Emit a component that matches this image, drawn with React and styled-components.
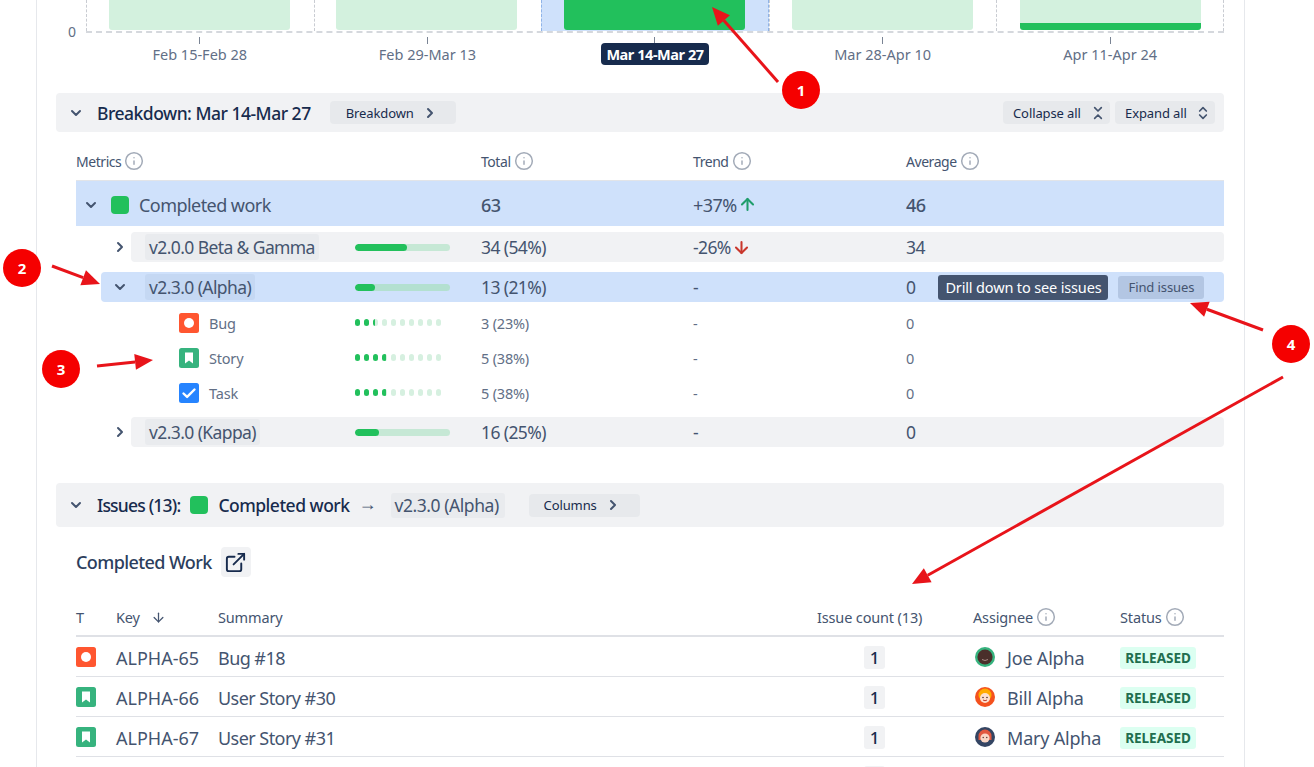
import React from "react";
import styled, { createGlobalStyle } from "styled-components";
import {
  ChevronDown,
  ChevronRight,
  ChevronsDownUp,
  ChevronsUpDown,
  ArrowUp,
  ArrowDown,
  ExternalLink,
  Info,
} from "lucide-react";

const Global = createGlobalStyle`
  html, body { margin: 0; padding: 0; background: #fff; height: 767px; overflow: hidden; }
  body { font-family: "Noto Sans", "Open Sans", "Liberation Sans", sans-serif; color: #44546f; }
  * { box-sizing: border-box; }
`;

const Page = styled.div`
  position: relative;
  width: 1314px;
  height: 767px;
  overflow: hidden;
`;

const Card = styled.main`
  margin-left: 36px;
  width: 1209px;
  height: 900px;
  padding: 0 20px 0 19px;
  background: #fff;
  border-left: 1px solid #e6e8ec;
  border-right: 1px solid #e6e8ec;
`;

/* chart */
const Chart = styled.section`
  display: grid;
  grid-template-columns: 30px 1fr;
  grid-template-rows: 33px auto;
`;
const YLabel = styled.span`
  align-self: end;
  justify-self: end;
  margin-right: 10px;
  font-size: 14px;
  line-height: 20px;
  margin-bottom: -9px;
  color: #626f86;
`;
const Plot = styled.div`
  display: grid;
  grid-template-columns: repeat(5, 1fr);
  border-bottom: 2px dashed #d5d8dd;
`;
const Slot = styled.div`
  display: flex;
  justify-content: center;
  height: 31px;
  padding-right: ${(p) => (p.$last || p.$active ? 0 : 2)}px;
  border-left: 1px dashed ${(p) => (p.$active ? "#8fb3e8" : "#c9ccd2")};
  border-right: ${(p) => (p.$last || p.$active ? "1px dashed" : "0 none")} ${(p) => (p.$active ? "#8fb3e8" : "#c9ccd2")};
  background: ${(p) => (p.$active ? "#cfe1fb" : "transparent")};
`;
const Bar = styled.div`
  width: 181px;
  height: 30px;
  border-radius: 0 0 3px 3px;
  background: ${(p) => (p.$active ? "#22c05c" : "#d3f1de")};
  border-bottom: ${(p) => (p.$stripe ? "7px solid #22c05c" : "0 none")};
`;
const XAxis = styled.div`
  grid-column: 2;
  display: grid;
  grid-template-columns: repeat(5, 1fr);
`;
const XCell = styled.div`
  display: flex;
  flex-direction: column;
  align-items: center;
  padding-top: 4px;
`;
const Tick = styled.i`
  display: block;
  width: 1px;
  height: 7px;
  background: #7a8494;
`;
const XLabel = styled.span`
  margin-top: -1px;
  height: 22px;
  line-height: 22px;
  padding: 0 5px;
  border-radius: 4px;
  font-size: 14.5px;
  white-space: nowrap;
  letter-spacing: ${(p) => (p.$active ? "-0.45px" : "0")};
  position: relative;
  color: ${(p) => (p.$active ? "#fff" : "#626f86")};
  background: ${(p) => (p.$active ? "#172b4d" : "transparent")};
  font-weight: ${(p) => (p.$active ? 700 : 400)};
`;

/* section bars */
const SectionBar = styled.header`
  display: flex;
  align-items: center;
  height: ${(p) => p.$h}px;
  margin-top: ${(p) => p.$mt}px;
  padding-left: 12px;
  background: #f1f2f4;
  border-radius: 4px;
  color: #172b4d;
`;
const BarTitle = styled.h2`
  margin: 0 0 0 13px;
  font-size: 17.5px;
  font-weight: 500;
  letter-spacing: -0.5px;
  white-space: nowrap;
`;
const Chip = styled.button`
  display: flex;
  align-items: center;
  height: 23px;
  width: ${(p) => p.$w}px;
  margin-left: ${(p) => p.$ml || 0}px;
  padding: 0 0 0 ${(p) => p.$pad || 10}px;
  gap: ${(p) => p.$gap || 8}px;
  border: 0;
  border-radius: 4px;
  background: #e7e9ec;
  color: #172b4d;
  font: inherit;
  font-size: 13px;
  letter-spacing: -0.1px;
  white-space: nowrap;
`;
const BarActions = styled.div`
  display: flex;
  gap: 5px;
  margin-left: auto;
  padding-right: 9px;
`;

/* metric table */
const MetricHead = styled.div`
  display: grid;
  grid-template-columns: 405px 212px 213px 1fr;
  height: 49px;
  margin-left: 20px;
  padding-top: 10px;
  align-items: center;
  border-bottom: 1px solid #e2e4e8;
`;
const HeadLabel = styled.span`
  display: flex;
  align-items: center;
  gap: 3px;
  font-size: 14px;
  letter-spacing: -0.45px;
  color: #44546f;
  white-space: nowrap;
`;
const InfoIcon = styled(Info)`
  width: 20px;
  height: 20px;
  color: #a3abb8;
  stroke-width: 1.8;
`;
const TotalRow = styled.div`
  display: grid;
  grid-template-columns: 405px 212px 213px 1fr;
  height: 45px;
  padding-top: 2px;
  margin-left: 20px;
  margin-bottom: 6px;
  align-items: center;
  background: #cfe1fb;
  font-size: 18px;
  letter-spacing: -0.55px;
`;
const TotalName = styled.div`
  display: flex;
  align-items: center;
  padding-left: 7px;
  white-space: nowrap;
`;
const Square = styled.span`
  width: 18px;
  height: 18px;
  border-radius: 4px;
  background: #22c05c;
  margin: ${(p) => p.$m};
  flex: none;
`;
const Strong = styled.span`
  font-weight: 500;
`;
const Trend = styled.span`
  display: flex;
  align-items: center;
  gap: 1px;
`;
const GroupRow = styled.div`
  display: flex;
  height: 30px;
  margin-left: 45px;
  margin-bottom: ${(p) => p.$mb || 0}px;
  border-radius: 4px;
  background: ${(p) => (p.$active ? "#cfe1fb" : "transparent")};
`;
const Gutter = styled.div`
  display: flex;
  align-items: center;
  justify-content: flex-end;
  width: 30px;
  padding-right: 3px;
  color: #44546f;
  flex: none;
`;
const GroupBody = styled.div`
  flex: 1;
  display: grid;
  grid-template-columns: 224px 95px 31px 212px 213px 1fr;
  align-items: center;
  border-radius: 4px;
  background: ${(p) => (p.$active ? "transparent" : "#f1f2f4")};
  font-size: 17.5px;
  letter-spacing: -0.6px;
  white-space: nowrap;
`;
const NameChip = styled.span`
  justify-self: start;
  margin-left: 14px;
  height: 26px;
  line-height: 26px;
  padding: 0 4px;
  border-radius: 3px;
  background: ${(p) => (p.$active ? "#c5d8f3" : "#e9ebee")};
`;
const Track = styled.div`
  height: 7px;
  border-radius: 4px;
  background: ${(p) => (p.$active ? "#b3e0d0" : "#c6e8d5")};
  overflow: hidden;
`;
const TrackFill = styled.div`
  height: 100%;
  border-radius: 4px;
  background: #22c05c;
`;
const Skip = styled.span``;
const AvgCell = styled.div`
  display: flex;
  align-items: center;
`;
const RowActions = styled.div`
  display: flex;
  align-items: center;
  gap: 10px;
  margin-left: 23px;
`;
const Tip = styled.span`
  display: block;
  height: 25px;
  line-height: 25px;
  width: 170px;
  text-align: center;
  border-radius: 3px;
  background: #44546f;
  color: #fff;
  font-size: 14.5px;
  letter-spacing: -0.15px;
`;
const FindBtn = styled.button`
  height: 23px;
  width: 86px;
  padding: 0;
  border: 0;
  border-radius: 3px;
  background: #b3c6e3;
  color: #44546f;
  font: inherit;
  font-size: 13px;
  letter-spacing: -0.1px;
`;
const SubList = styled.div`
  margin: 3px 0 7px;
`;
const SubRow = styled.div`
  display: grid;
  grid-template-columns: 176px 126px 212px 213px 1fr;
  height: 35px;
  padding-left: 123px;
  align-items: center;
  font-size: 14.5px;
  color: #626f86;
  letter-spacing: -0.2px;
`;
const TypeCell = styled.div`
  display: flex;
  align-items: center;
  gap: 10px;
`;
const Dots = styled.div`
  display: flex;
  gap: 4.2px;
`;
const Dot = styled.i`
  display: block;
  width: 4.8px;
  height: 7px;
  border-radius: 3px;
`;

/* issues */
const IssueLabel = styled.span`
  margin-left: ${(p) => p.$ml || 0}px;
  font-size: 17.5px;
  font-weight: 500;
  letter-spacing: ${(p) => p.$ls};
  white-space: nowrap;
`;
const Arrow = styled.span`
  margin: -4px 14px 0 9px;
  font-size: 18px;
  color: #44546f;
`;
const VersionChip = styled.span`
  height: 25px;
  line-height: 25px;
  padding: 0 4px;
  width: 114px;
  border-radius: 3px;
  background: #e9ebee;
  font-size: 17.5px;
  letter-spacing: -0.45px;
  color: #44546f;
  white-space: nowrap;
`;
const TitleRow = styled.div`
  display: flex;
  align-items: center;
  gap: 9px;
  height: 30px;
  margin: 20px 0 0 20px;
`;
const Title = styled.h3`
  margin: 0;
  font-size: 18px;
  font-weight: 500;
  letter-spacing: -0.6px;
  color: #2c3e5d;
`;
const LinkBtn = styled.span`
  display: flex;
  align-items: center;
  justify-content: center;
  width: 30px;
  height: 30px;
  border-radius: 4px;
  background: #f1f2f4;
  color: #172b4d;
`;
const IssueGrid = styled.div`
  display: grid;
  grid-template-columns: 40px 102px 599px 156px 147px 104px;
  margin-left: 20px;
  align-items: center;
`;
const IssueHead = styled(IssueGrid)`
  height: 38px;
  margin-top: 22px;
  border-bottom: 2px solid #dfe1e6;
  & > span {
    font-size: 14.5px;
    letter-spacing: -0.15px;
  }
`;
const IssueRow = styled(IssueGrid)`
  height: 40px;
  border-bottom: 1px solid #dfe1e6;
  font-size: 18px;
  color: #44546f;
  white-space: nowrap;
`;
const IconCell = styled.span`
  display: flex;
`;
const KeyCell = styled.span`
  padding-top: 2px;
`;
const SummaryCell = styled.span`
  padding-top: 2px;
  letter-spacing: -0.55px;
`;
const KeyHead = styled(HeadLabel)`
  gap: 11px;
`;
const Assignee = styled.div`
  display: flex;
  align-items: center;
  gap: 12px;
  padding-left: 2px;
`;
const AssigneeName = styled.span`
  padding-top: 2px;
  letter-spacing: -0.2px;
`;
const Count = styled.span`
  display: block;
  width: 21px;
  height: 23px;
  line-height: 23px;
  margin: 2px 0 0 47px;
  border-radius: 3px;
  background: #f1f2f4;
  text-align: center;
  font-weight: 500;
  color: #172b4d;
  font-size: 17px;
`;
const Lozenge = styled.span`
  display: inline-block;
  width: 76px;
  height: 22px;
  margin-top: 2px;
  line-height: 22px;
  text-align: center;
  border-radius: 3px;
  background: #dcfff1;
  color: #216e4e;
  font-size: 13.5px;
  font-weight: 700;
  letter-spacing: 0;
`;
const Overlay = styled.svg`
  position: absolute;
  inset: 0;
  pointer-events: none;
`;
const Num = styled.text`
  font-family: "Noto Sans", sans-serif;
  font-size: 15px;
  font-weight: 700;
  fill: #fff;
  text-anchor: middle;
`;

const BugIcon = () => (
  <svg width="20" height="20" viewBox="0 0 20 20">
    <rect width="20" height="20" rx="2.5" fill="#ff5630" />
    <circle cx="10" cy="10" r="5" fill="#fff" />
  </svg>
);
const StoryIcon = () => (
  <svg width="20" height="20" viewBox="0 0 20 20">
    <rect width="20" height="20" rx="2.5" fill="#36b37e" />
    <path d="M6 4.5h8v11l-4-3-4 3z" fill="#fff" />
  </svg>
);
const TaskIcon = () => (
  <svg width="20" height="20" viewBox="0 0 20 20">
    <rect width="20" height="20" rx="2.5" fill="#2684ff" />
    <path d="M4.5 10.5l3.6 3.4L15.5 6.5" fill="none" stroke="#fff" strokeWidth="2.4" strokeLinecap="round" strokeLinejoin="round" />
  </svg>
);

const Avatar = ({ kind }) => {
  if (kind === "joe")
    return (
      <svg width="20" height="20" viewBox="0 0 20 20">
        <circle cx="10" cy="10" r="10" fill="#36b37e" />
        <circle cx="10" cy="10" r="7.6" fill="#4a2f2a" />
        <path d="M7 12.5q3 2 6 0" stroke="#a98b85" fill="none" />
      </svg>
    );
  if (kind === "bill")
    return (
      <svg width="20" height="20" viewBox="0 0 20 20">
        <circle cx="10" cy="10" r="10" fill="#f4511e" />
        <circle cx="10" cy="8" r="6.5" fill="#ffab00" />
        <circle cx="10" cy="11" r="5" fill="#fde0cf" />
        <circle cx="8" cy="10.5" r=".8" fill="#4a2f2a" />
        <circle cx="12" cy="10.5" r=".8" fill="#4a2f2a" />
        <path d="M8 13q2 1.5 4 0" stroke="#c0392b" fill="none" />
      </svg>
    );
  if (kind === "mary")
    return (
      <svg width="20" height="20" viewBox="0 0 20 20">
        <circle cx="10" cy="10" r="10" fill="#344563" />
        <path d="M3.5 13V9a6.5 6.5 0 0 1 13 0v4z" fill="#e2583e" />
        <circle cx="10" cy="11" r="4.6" fill="#fbd7c5" />
        <circle cx="8.2" cy="10.5" r=".7" fill="#4a2f2a" />
        <circle cx="11.8" cy="10.5" r=".7" fill="#4a2f2a" />
      </svg>
    );
  return (
    <svg width="20" height="20" viewBox="0 0 20 20">
      <circle cx="10" cy="10" r="10" fill="#f4511e" />
    </svg>
  );
};

const ICON = { bug: BugIcon, story: StoryIcon, task: TaskIcon };

const periods = [
  { label: "Feb 15-Feb 28" },
  { label: "Feb 29-Mar 13" },
  { label: "Mar 14-Mar 27", active: true },
  { label: "Mar 28-Apr 10" },
  { label: "Apr 11-Apr 24", stripe: true },
];

const subRows = [
  { name: "Bug", icon: "bug", filled: 2.3, value: "3 (23%)" },
  { name: "Story", icon: "story", filled: 3.8, value: "5 (38%)" },
  { name: "Task", icon: "task", filled: 3.8, value: "5 (38%)" },
];

const issues = [
  { icon: "bug", key: "ALPHA-65", summary: "Bug #18", who: "Joe Alpha", avatar: "joe" },
  { icon: "story", key: "ALPHA-66", summary: "User Story #30", who: "Bill Alpha", avatar: "bill" },
  { icon: "story", key: "ALPHA-67", summary: "User Story #31", who: "Mary Alpha", avatar: "mary" },
];

const DotBar = ({ filled }) => (
  <Dots>
    {Array.from({ length: 10 }, (_, i) => {
      const pct = Math.max(0, Math.min(1, filled - i)) * 100;
      return (
        <Dot
          key={i}
          style={{ background: `linear-gradient(90deg,#22c05c ${pct}%,#d6f0e0 ${pct}%)` }}
        />
      );
    })}
  </Dots>
);

const Group = ({ name, pct, total, trend, avg, active, open, mb, children }) => (
  <GroupRow $active={active} $mb={mb}>
    <Gutter>
      {open ? <ChevronDown size={16} strokeWidth={3} /> : <ChevronRight size={16} strokeWidth={3} />}
    </Gutter>
    <GroupBody $active={active}>
      <NameChip $active={active}>{name}</NameChip>
      <Track $active={active}>
        <TrackFill style={{ width: `${pct}%` }} />
      </Track>
      <Skip />
      <span>{total}</span>
      <span>{trend}</span>
      <AvgCell>
        <span>{avg}</span>
        {children}
      </AvgCell>
    </GroupBody>
  </GroupRow>
);

const Arrowed = ({ x1, y1, x2, y2 }) => {
  const a = Math.atan2(y2 - y1, x2 - x1);
  const len = 18;
  const wid = 8;
  const bx = x2 - len * Math.cos(a);
  const by = y2 - len * Math.sin(a);
  const px = -Math.sin(a) * wid;
  const py = Math.cos(a) * wid;
  return (
    <g>
      <line x1={x1} y1={y1} x2={bx} y2={by} stroke="#e8141a" strokeWidth="3" />
      <polygon points={`${x2},${y2} ${bx + px},${by + py} ${bx - px},${by - py}`} fill="#e8141a" />
    </g>
  );
};

const Marker = ({ cx, cy, n }) => (
  <g>
    <circle cx={cx} cy={cy} r="19" fill="#f50000" />
    <Num x={cx} y={cy + 5.5}>{n}</Num>
  </g>
);

export default function App() {
  return (
    <Page>
      <Global />
      <Card>
        <Chart>
          <YLabel>0</YLabel>
          <Plot>
            {periods.map((p, i) => (
              <Slot key={p.label} $active={p.active} $last={i === 4}>
                <Bar $active={p.active} $stripe={p.stripe} />
              </Slot>
            ))}
          </Plot>
          <XAxis>
            {periods.map((p) => (
              <XCell key={p.label}>
                <Tick />
                <XLabel $active={p.active}>{p.label}</XLabel>
              </XCell>
            ))}
          </XAxis>
        </Chart>

        <SectionBar $h={39} $mt={28}>
          <ChevronDown size={16} strokeWidth={3} color="#44546f" />
          <BarTitle>Breakdown: Mar 14-Mar 27</BarTitle>
          <Chip $w={126} $ml={19} $pad={16}>
            Breakdown <ChevronRight size={16} strokeWidth={3} color="#44546f" />
          </Chip>
          <BarActions>
            <Chip $w={107} $gap={9}>
              Collapse all <ChevronsDownUp size={16} strokeWidth={2.5} color="#44546f" />
            </Chip>
            <Chip $w={100} $gap={8}>
              Expand all <ChevronsUpDown size={16} strokeWidth={2.5} color="#44546f" />
            </Chip>
          </BarActions>
        </SectionBar>

        <MetricHead>
          <HeadLabel>Metrics <InfoIcon /></HeadLabel>
          <HeadLabel>Total <InfoIcon /></HeadLabel>
          <HeadLabel>Trend <InfoIcon /></HeadLabel>
          <HeadLabel>Average <InfoIcon /></HeadLabel>
        </MetricHead>

        <TotalRow>
          <TotalName>
            <ChevronDown size={16} strokeWidth={3} />
            <Square $m="0 10px 0 12px" />
            Completed work
          </TotalName>
          <Strong>63</Strong>
          <Trend>
            +37% <ArrowUp size={19} strokeWidth={2.6} color="#1f9d6b" />
          </Trend>
          <Strong>46</Strong>
        </TotalRow>

        <Group
          name="v2.0.0 Beta & Gamma"
          pct={55}
          total="34 (54%)"
          avg="34"
          mb={10}
          trend={<Trend>-26% <ArrowDown size={19} strokeWidth={2.6} color="#c9372c" /></Trend>}
        />
        <Group name="v2.3.0 (Alpha)" pct={21} total="13 (21%)" trend="-" avg="0" active open>
          <RowActions>
            <Tip>Drill down to see issues</Tip>
            <FindBtn>Find issues</FindBtn>
          </RowActions>
        </Group>
        <SubList>
          {subRows.map((r) => {
            const Icon = ICON[r.icon];
            return (
              <SubRow key={r.name}>
                <TypeCell><Icon />{r.name}</TypeCell>
                <DotBar filled={r.filled} />
                <span>{r.value}</span>
                <span>-</span>
                <span>0</span>
              </SubRow>
            );
          })}
        </SubList>
        <Group name="v2.3.0 (Kappa)" pct={25} total="16 (25%)" trend="-" avg="0" />

        <SectionBar $h={44} $mt={36}>
          <ChevronDown size={16} strokeWidth={3} color="#44546f" />
          <IssueLabel $ml={13} $ls="-0.8px">Issues (13):</IssueLabel>
          <Square $m="0 10px 0 10px" />
          <IssueLabel $ls="-0.5px">Completed work</IssueLabel>
          <Arrow>→</Arrow>
          <VersionChip>v2.3.0 (Alpha)</VersionChip>
          <Chip $w={111} $ml={24} $pad={15}>
            Columns <ChevronRight size={16} strokeWidth={3} color="#44546f" />
          </Chip>
        </SectionBar>

        <TitleRow>
          <Title>Completed Work</Title>
          <LinkBtn><ExternalLink size={23} strokeWidth={2} /></LinkBtn>
        </TitleRow>

        <IssueHead>
          <HeadLabel>T</HeadLabel>
          <KeyHead>Key <ArrowDown size={15} strokeWidth={2} /></KeyHead>
          <HeadLabel>Summary</HeadLabel>
          <HeadLabel>Issue count (13)</HeadLabel>
          <HeadLabel>Assignee <InfoIcon /></HeadLabel>
          <HeadLabel>Status <InfoIcon /></HeadLabel>
        </IssueHead>
        {issues.map((r) => {
          const Icon = ICON[r.icon];
          return (
            <IssueRow key={r.key}>
              <IconCell><Icon /></IconCell>
              <KeyCell>{r.key}</KeyCell>
              <SummaryCell>{r.summary}</SummaryCell>
              <Count>1</Count>
              <Assignee><Avatar kind={r.avatar} /><AssigneeName>{r.who}</AssigneeName></Assignee>
              <Lozenge>RELEASED</Lozenge>
            </IssueRow>
          );
        })}
        <IssueRow>
          <Skip />
          <Skip />
          <Skip />
          <Count />
          <Assignee><Avatar kind="next" /></Assignee>
          <Skip />
        </IssueRow>
      </Card>

      <Overlay width="1314" height="767" viewBox="0 0 1314 767">
        <Arrowed x1={778} y1={82} x2={712} y2={7} />
        <Arrowed x1={52} y1={266} x2={100} y2={284} />
        <Arrowed x1={97} y1={366} x2={153} y2={360} />
        <Arrowed x1={1263} y1={330} x2={1190} y2={303} />
        <Arrowed x1={1283} y1={377} x2={912} y2={584} />
        <Marker cx={801} cy={90} n="1" />
        <Marker cx={22} cy={268} n="2" />
        <Marker cx={61} cy={369} n="3" />
        <Marker cx={1291} cy={344} n="4" />
      </Overlay>
    </Page>
  );
}
